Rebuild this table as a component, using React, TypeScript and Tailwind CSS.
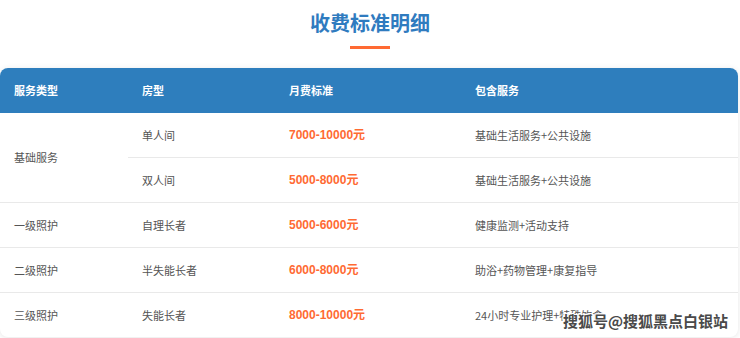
import type { ReactNode } from "react";

const cjk = "font-['Noto_Sans_CJK_SC','Noto_Sans',sans-serif]";

const rows = [
    { level: "一级照护", room: "自理长者", price: "5000-6000", services: "健康监测+活动支持" },
    { level: "二级照护", room: "半失能长者", price: "6000-8000", services: "助浴+药物管理+康复指导" },
    { level: "三级照护", room: "失能长者", price: "8000-10000", services: "24小时专业护理+特殊饮食" },
];

function Price({ value }: { value: string }) {
    return (
        <span className="text-[12px] font-bold text-[#ff6a33] font-['Liberation_Sans','Noto_Sans_CJK_SC',sans-serif]">
            {value}元
        </span>
    );
}

function Cells({ room, price, services }: { room: string; price: string; services: string }) {
    return (
        <>
            <div className="w-[147px] shrink-0 pl-[14px]">{room}</div>
            <div className="w-[186px] shrink-0 pl-[14px]"><Price value={price} /></div>
            <div className="flex-1 pl-[14px]">{services}</div>
        </>
    );
}

function Row({ children, last }: { children: ReactNode; last?: boolean }) {
    return (
        <div className={last ? "flex h-[44px] items-center" : "flex h-[45px] items-center border-b border-[#e9e9e9]"}>
            {children}
        </div>
    );
}

export default function App() {
    return (
        <div className={`relative w-[740px] h-[338px] bg-white overflow-hidden ${cjk}`}>
            {/* Title */}
            <div className="flex flex-col items-center pt-[10px]">
                <h1 className="text-[20px] leading-[26px] font-bold text-[#2f7bbf]">收费标准明细</h1>
                <div className="mt-[10px] w-[40px] h-[3px] bg-[#ff6a33]" />
            </div>

            {/* Table card */}
            <div className="mt-[19px] w-[738px] rounded-[8px] bg-white shadow-[0_1px_6px_rgba(0,0,0,0.1)] overflow-hidden text-[11px] text-[#555]">
                <div className="flex h-[45px] items-center bg-[#2e7ebd] text-white font-bold">
                    <div className="w-[128px] shrink-0 pl-[14px]">服务类型</div>
                    <div className="w-[147px] shrink-0 pl-[14px]">房型</div>
                    <div className="w-[186px] shrink-0 pl-[14px]">月费标准</div>
                    <div className="flex-1 pl-[14px]">包含服务</div>
                </div>

                <div className="flex border-b border-[#e9e9e9]">
                    <div className="w-[128px] shrink-0 pl-[14px] flex items-center">基础服务</div>
                    <div className="flex-1 flex flex-col">
                        <Row><Cells room="单人间" price="7000-10000" services="基础生活服务+公共设施" /></Row>
                        <div className="flex h-[44px] items-center">
                            <Cells room="双人间" price="5000-8000" services="基础生活服务+公共设施" />
                        </div>
                    </div>
                </div>

                {rows.map((r, i) => (
                    <Row key={r.level} last={i === rows.length - 1}>
                        <div className="w-[128px] shrink-0 pl-[14px]">{r.level}</div>
                        <Cells room={r.room} price={r.price} services={r.services} />
                    </Row>
                ))}
            </div>

            {/* Watermark */}
            <div className="absolute left-[563px] top-[311px] text-[15px] leading-[20px] font-bold text-[#4a4a4a] [text-shadow:1px_0_0_#fff,-1px_0_0_#fff,0_1px_0_#fff,0_-1px_0_#fff,1px_1px_0_#fff,-1px_-1px_0_#fff,1px_-1px_0_#fff,-1px_1px_0_#fff]">
                搜狐号@搜狐黑点白银站
            </div>
        </div>
    );
}
